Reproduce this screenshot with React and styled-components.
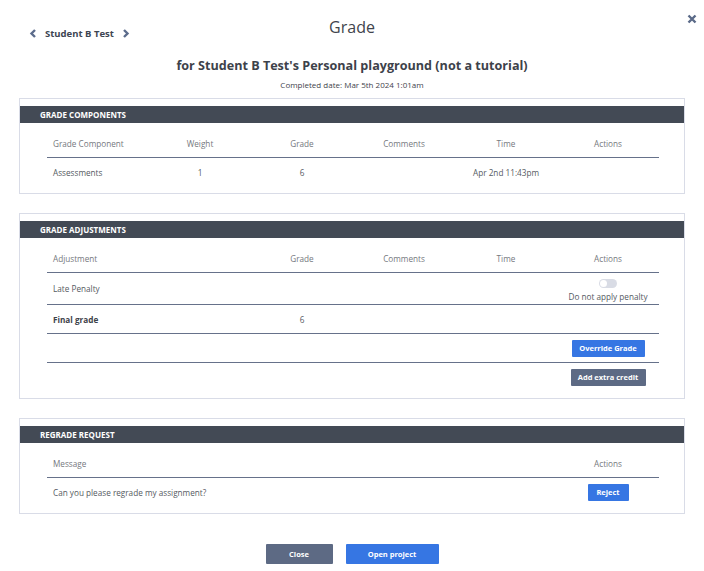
import React from 'react'
import styled, { createGlobalStyle, css } from 'styled-components'

const Global = createGlobalStyle`
  body {
    margin: 0;
    background: #fff;
    font-family: "Open Sans", "Noto Sans", sans-serif;
    color: #4a4f57;
  }
`

const Page = styled.div`
  width: 704px;
  padding-bottom: 6px;
`

const TopBar = styled.div`
  display: grid;
  grid-template-columns: 1fr auto 1fr;
  height: 48px;
`

const Nav = styled.div`
  display: flex;
  align-items: center;
  gap: 8px;
  align-self: start;
  margin: 27px 0 0 29px;
  font-size: 9.5px;
  font-weight: 700;
  color: #3d4552;
`

const Title = styled.h1`
  margin: 16px 0 0;
  align-self: start;
  font-size: 16px;
  font-weight: 400;
  color: #3f444c;
`

const CloseX = styled.div`
  justify-self: end;
  margin: 7px 7px 0 0;
`

const Heading = styled.h2`
  margin: 9px 0 0;
  text-align: center;
  font-size: 12.6px;
  font-weight: 700;
  color: #3d424a;
`

const Completed = styled.div`
  margin-top: 5px;
  text-align: center;
  font-size: 8px;
  color: #3f444c;
`

const Cards = styled.div`
  display: flex;
  flex-direction: column;
  gap: 19px;
  margin: 8px 19px 0;
`

const Card = styled.section`
  border: 1px solid #d9dce7;
  padding: 7px 0 7px;
`

const CardBar = styled.div`
  height: 17px;
  background: #434a55;
  color: #fff;
  font-size: 8px;
  font-weight: 700;
  display: flex;
  align-items: center;
  padding-left: 20px;
`

const Table = styled.div`
  margin: 6px 25px 0 27px;
`

const Row = styled.div`
  display: grid;
  grid-template-columns: repeat(6, 1fr);
  align-items: center;
  min-height: ${(p) => p.h || 28}px;
  ${(p) =>
    p.line &&
    css`
      border-bottom: 1px solid #66718a;
    `}
`

const Cell = styled.div`
  font-size: 8.2px;
  text-align: center;
  color: ${(p) => (p.head ? '#75787e' : '#555a62')};
  ${(p) =>
    p.first &&
    css`
      text-align: left;
      padding-left: 6px;
    `}
  ${(p) => p.span && css`grid-column: span ${p.span};`}
  ${(p) => p.bold && css`font-weight: 700; color: #3d424a;`}
`

const ActionStack = styled.div`
  display: flex;
  flex-direction: column;
  align-items: center;
  gap: 3px;
  padding-top: 4px;
`

const Toggle = styled.div`
  width: 18px;
  height: 9px;
  border-radius: 5px;
  background: #d9dce5;
  position: relative;
  &::after {
    content: '';
    position: absolute;
    left: 1px;
    top: 1px;
    width: 7px;
    height: 7px;
    border-radius: 50%;
    background: #fff;
  }
`

const Button = styled.button`
  font-family: inherit;
  font-size: 7.5px;
  font-weight: 700;
  color: #fff;
  border: none;
  border-radius: 1px;
  height: ${(p) => p.h || 17}px;
  width: ${(p) => p.w}px;
  padding: 0;
  background: ${(p) => (p.gray ? '#5d6a84' : '#3676e3')};
  cursor: pointer;
`

const ActionCell = styled.div`
  grid-column: 6;
  display: flex;
  justify-content: center;
`

const Footer = styled.div`
  display: flex;
  justify-content: center;
  gap: 13px;
  margin-top: 30px;
`

const Chevron = ({ dir }) => (
  <svg width="8" height="9" viewBox="0 0 8 9">
    <path
      d={dir === 'left' ? 'M6 1 L2.5 4.5 L6 8' : 'M2 1 L5.5 4.5 L2 8'}
      fill="none"
      stroke="#5c6c8c"
      strokeWidth="2.4"
    />
  </svg>
)

const XIcon = () => (
  <svg width="10" height="10" viewBox="0 0 10 10">
    <path d="M1.5 1.5 L8.5 8.5 M8.5 1.5 L1.5 8.5" stroke="#5a6a88" strokeWidth="2.4" />
  </svg>
)

const cols = ['Grade Component', 'Weight', 'Grade', 'Comments', 'Time', 'Actions']

export default function App() {
  return (
    <Page>
      <Global />
      <TopBar>
        <Nav>
          <Chevron dir="left" />
          <span>Student B Test</span>
          <Chevron dir="right" />
        </Nav>
        <Title>Grade</Title>
        <CloseX>
          <XIcon />
        </CloseX>
      </TopBar>
      <Heading>for Student B Test's Personal playground (not a tutorial)</Heading>
      <Completed>Completed date: Mar 5th 2024 1:01am</Completed>

      <Cards>
        <Card>
          <CardBar>GRADE COMPONENTS</CardBar>
          <Table>
            <Row line>
              {cols.map((c, i) => (
                <Cell head first={i === 0} key={c}>{c}</Cell>
              ))}
            </Row>
            <Row>
              <Cell first>Assessments</Cell>
              <Cell>1</Cell>
              <Cell>6</Cell>
              <Cell></Cell>
              <Cell>Apr 2nd 11:43pm</Cell>
              <Cell></Cell>
            </Row>
          </Table>
        </Card>

        <Card>
          <CardBar>GRADE ADJUSTMENTS</CardBar>
          <Table>
            <Row line>
              <Cell head first span={2}>Adjustment</Cell>
              <Cell head>Grade</Cell>
              <Cell head>Comments</Cell>
              <Cell head>Time</Cell>
              <Cell head>Actions</Cell>
            </Row>
            <Row line h={31}>
              <Cell first span={5}>Late Penalty</Cell>
              <ActionStack>
                <Toggle />
                <Cell>Do not apply penalty</Cell>
              </ActionStack>
            </Row>
            <Row line h={28}>
              <Cell first bold span={2}>Final grade</Cell>
              <Cell>6</Cell>
            </Row>
            <Row line h={28}>
              <ActionCell>
                <Button w={73}>Override Grade</Button>
              </ActionCell>
            </Row>
            <Row h={28}>
              <ActionCell>
                <Button gray w={75}>Add extra credit</Button>
              </ActionCell>
            </Row>
          </Table>
        </Card>

        <Card>
          <CardBar>REGRADE REQUEST</CardBar>
          <Table>
            <Row line>
              <Cell head first span={5}>Message</Cell>
              <Cell head>Actions</Cell>
            </Row>
            <Row h={28}>
              <Cell first span={5}>Can you please regrade my assignment?</Cell>
              <ActionCell>
                <Button w={41}>Reject</Button>
              </ActionCell>
            </Row>
          </Table>
        </Card>
      </Cards>

      <Footer>
        <Button gray w={67} h={20}>Close</Button>
        <Button w={93} h={20}>Open project</Button>
      </Footer>
    </Page>
  )
}
